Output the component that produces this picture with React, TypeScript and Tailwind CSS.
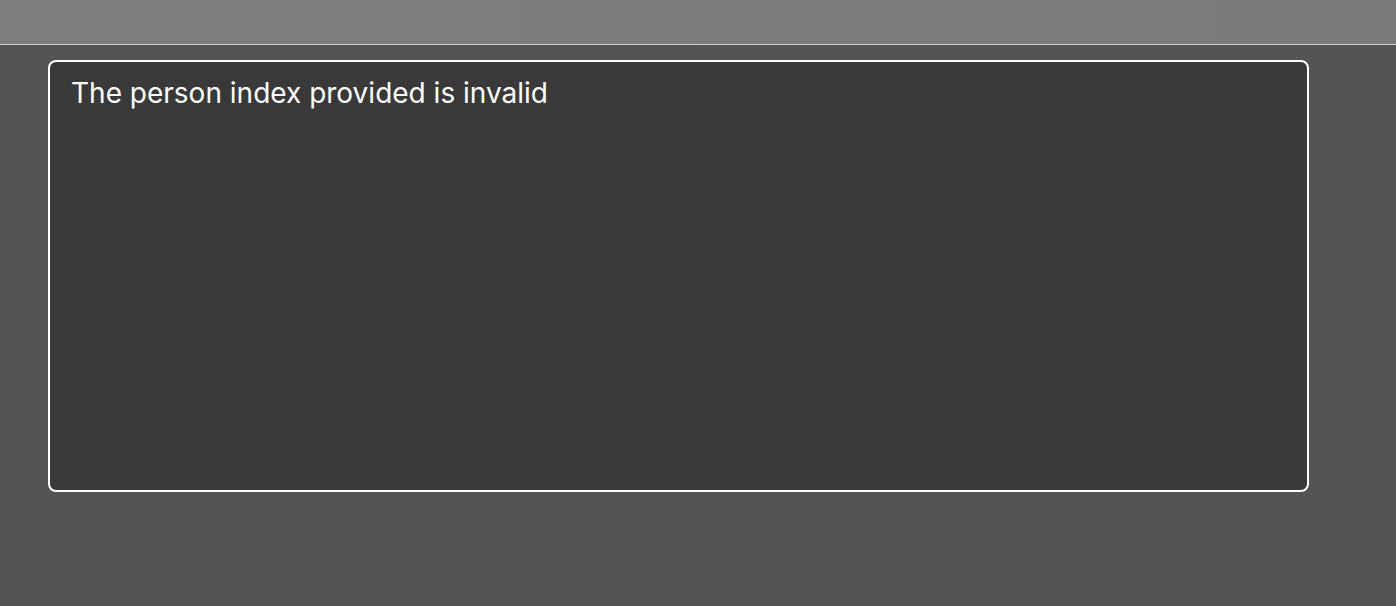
import React from "react";

export default function App() {
  return (
    <div className="w-[1396px] h-[606px] bg-[#545454] flex flex-col" style={{ fontFamily: "Inter, 'Noto Sans', sans-serif" }}>
      <div className="h-[44px] bg-gradient-to-r from-[#7e7e7e] to-[#7a7a7a] border-b border-[#d0d0d0] box-content" />
      <div className="pt-[15px] pl-[48px]">
        <div className="w-[1261px] h-[432px] bg-[#393939] border-2 border-white rounded-[8px] pl-[21px] pr-[22px] py-[10px]">
          <p className="text-[28px] leading-[42px] text-white">The person index provided is invalid</p>
        </div>
      </div>
    </div>
  );
}
